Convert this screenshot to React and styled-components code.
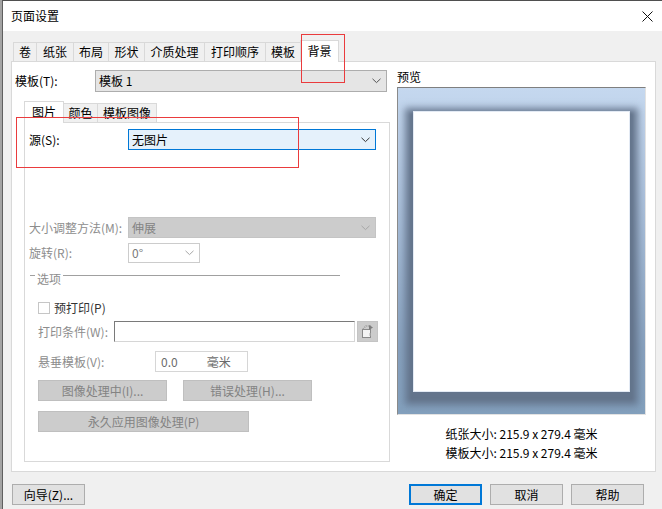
import React from "react";
import styled, { createGlobalStyle, css } from "styled-components";

const Global = createGlobalStyle`
  * { box-sizing: border-box; }
  html, body { margin: 0; padding: 0; }
  body {
    background: #a3a3a3;
    font-family: "Noto Sans CJK SC", "Noto Sans", sans-serif;
    font-size: 12px;
    color: #000;
    overflow: hidden;
  }
`;

const Window = styled.div`
  position: relative;
  margin-left: 2px;
  width: 660px;
  height: 509px;
  border-left: 1px solid #5f5f5f;
  border-top: 1px solid #4f4f4f;
  display: flex;
  flex-direction: column;
  background: #f0f0f0;
`;

const TitleBar = styled.div`
  height: 30px;
  flex: none;
  background: #fff;
  display: flex;
  align-items: center;
  justify-content: space-between;
  padding: 0 9px 0 8px;
  font-size: 12px;
  line-height: 16px;
`;

const Body = styled.div`
  flex: 1;
  display: flex;
  flex-direction: column;
  padding: 9px 6px 0 8px;
`;

const TabStrip = styled.div`
  display: flex;
  align-items: flex-end;
  height: ${(p) => p.$h}px;
  padding-left: ${(p) => p.$indent}px;
  flex: none;
`;

const Tab = styled.div`
  width: ${(p) => p.$w}px;
  height: ${(p) => (p.$active ? p.$h + 1 : p.$h - 2)}px;
  margin-bottom: ${(p) => (p.$active ? -1 : 0)}px;
  margin-left: ${(p) => (p.$first ? 0 : -1)}px;
  border: 1px solid #d9d9d9;
  border-bottom: none;
  background: ${(p) => (p.$active ? "#fff" : "#f0f0f0")};
  position: relative;
  z-index: ${(p) => (p.$active ? 2 : 1)};
  display: flex;
  align-items: ${(p) => (p.$active ? "flex-start" : "center")};
  padding-top: ${(p) => (p.$active ? 2 : 0)}px;
  justify-content: center;
  line-height: 16px;
  white-space: nowrap;
`;

const Panel = styled.div`
  height: 411px;
  flex: none;
  background: #fff;
  border: 1px solid #d9d9d9;
  display: flex;
  padding: 8px 9px 9px 3px;
  position: relative;
  z-index: 1;
`;

const LeftCol = styled.div`
  width: 375px;
  display: flex;
  flex-direction: column;
`;

const RightCol = styled.div`
  width: 249px;
  margin-left: 7px;
  display: flex;
  flex-direction: column;
`;

const Row = styled.div`
  display: flex;
  align-items: center;
  height: ${(p) => p.$h || 21}px;
  margin-top: ${(p) => p.$mt || 0}px;
  padding-left: ${(p) => p.$pl || 0}px;
  flex: none;
`;

const Label = styled.div`
  width: ${(p) => p.$w}px;
  flex: none;
  line-height: 16px;
  white-space: nowrap;
  color: ${(p) => (p.$disabled ? "#8d8d8d" : "#000")};
`;

const variants = {
  plain: css`
    background: #e5e5e5;
    border: 1px solid #adadad;
    color: #000;
  `,
  focus: css`
    background: #e5f1fb;
    border: 1px solid #0078d7;
    color: #000;
  `,
  disabled: css`
    background: #cccccc;
    border: 1px solid #c4c4c4;
    color: #838383;
  `,
  white: css`
    background: #fff;
    border: 1px solid #cccccc;
    color: #7a7a7a;
  `,
};

const Select = styled.div`
  width: ${(p) => p.$w}px;
  height: ${(p) => p.$h || 21}px;
  ${(p) => variants[p.$variant]}
  display: flex;
  align-items: center;
  justify-content: space-between;
  padding: 0 5px 0 3px;
  line-height: 16px;
  flex: none;
`;

const Chevron = ({ color = "#555" }) => (
  <svg width="9" height="6" viewBox="0 0 9 6">
    <path d="M0.5 0.8 L4.5 4.6 L8.5 0.8" fill="none" stroke={color} strokeWidth="1" />
  </svg>
);

const InnerTabsWrap = styled.div`
  margin-top: 9px;
  margin-left: 9px;
  display: flex;
  flex-direction: column;
`;

const InnerPanel = styled.div`
  width: 366px;
  height: 340px;
  border: 1px solid #d9d9d9;
  padding: 6px 4px 0 4px;
  display: flex;
  flex-direction: column;
`;

const GroupHead = styled.div`
  display: flex;
  align-items: flex-start;
  width: 311px;
  margin-top: 6px;
  height: 17px;
  padding-left: 1px;
  color: #8d8d8d;
  line-height: 16px;
`;

const GroupLine = styled.div`
  height: 1px;
  background: #a0a0a0;
  margin-top: 6px;
  width: ${(p) => (p.$w ? `${p.$w}px` : "auto")};
  flex: ${(p) => (p.$w ? "none" : 1)};
`;

const GroupTitle = styled.span`
  margin: 2px 2px 0 2px;
`;

const CheckBox = styled.div`
  width: 12px;
  height: 12px;
  border: 1px solid #c6c6c6;
  background: #fff;
  margin-right: 4px;
  flex: none;
`;

const CheckText = styled.span`
  color: #333;
  line-height: 16px;
`;

const TextInput = styled.div`
  width: ${(p) => p.$w}px;
  height: 21px;
  background: #fff;
  border: 1px solid #d6d6d6;
  ${(p) =>
    p.$sunken &&
    css`
      border-top-color: #7a7a7a;
      border-left-color: #7a7a7a;
    `}
  display: flex;
  align-items: center;
  padding-left: 5px;
  color: #6b6b6b;
  line-height: 16px;
  flex: none;
`;

const Unit = styled.span`
  margin-left: 29px;
`;

const IconBtn = styled.div`
  width: 21px;
  height: 21px;
  margin-left: 2px;
  background: #cccccc;
  border: 1px solid #c4c4c4;
  display: flex;
  align-items: center;
  justify-content: center;
  flex: none;
`;

const Button = styled.div`
  width: ${(p) => p.$w}px;
  height: 21px;
  flex: none;
  display: flex;
  align-items: center;
  justify-content: center;
  line-height: 16px;
  white-space: nowrap;
  ${(p) =>
    p.$disabled
      ? css`
          background: #cccccc;
          border: 1px solid #bfbfbf;
          color: #838383;
        `
      : css`
          background: #e1e1e1;
          border: ${p.$default ? "2px solid #0078d7" : "1px solid #adadad"};
          color: #000;
        `}
`;

const ButtonRow = styled.div`
  display: flex;
  gap: ${(p) => p.$gap}px;
  margin-top: ${(p) => p.$mt}px;
  padding-left: ${(p) => p.$pl || 0}px;
`;

const PreviewTitle = styled.div`
  line-height: 14px;
  height: 14px;
  margin-bottom: 3px;
`;

const PreviewBox = styled.div`
  width: 249px;
  height: 330px;
  border-top: 1px solid #7f7f7f;
  border-left: 1px solid #8a8a8a;
  border-right: 1px solid #e2e2e2;
  border-bottom: 1px solid #e2e2e2;
  background: linear-gradient(180deg, #c5d8ef 0%, #a8bed9 40%, #88a2bf 80%, #83a0bd 100%);
  padding: 23px 15px;
  overflow: hidden;
`;

const Page = styled.div`
  width: 217px;
  height: 281px;
  background: #fff;
  border: 1px solid #e3eaf4;
  box-shadow: 0 5px 7px 8px rgba(98, 114, 138, 0.9), 0 5px 2px 3px rgba(100, 115, 136, 0.6);
`;

const SizeInfo = styled.div`
  margin-top: 9px;
  text-align: center;
  line-height: 19px;
`;

const BottomBar = styled.div`
  height: 37px;
  flex: none;
  display: flex;
  justify-content: space-between;
  align-items: flex-start;
  padding: 12px 12px 0 1px;
`;

const RightButtons = styled.div`
  display: flex;
  gap: 8px;
`;

const Annotation = styled.div`
  position: absolute;
  left: ${(p) => p.$x}px;
  top: ${(p) => p.$y}px;
  width: ${(p) => p.$w}px;
  height: ${(p) => p.$h}px;
  border: 1px solid #ea3b3d;
  pointer-events: none;
  z-index: 10;
`;

const outerTabs = [
  ["卷", 24],
  ["纸张", 38],
  ["布局", 36],
  ["形状", 37],
  ["介质处理", 61],
  ["打印顺序", 62],
  ["模板", 36],
  ["背景", 39, true],
];

const innerTabs = [
  ["图片", 40, true],
  ["颜色", 35],
  ["模板图像", 60],
];

const CloseIcon = () => (
  <svg width="11" height="11" viewBox="0 0 11 11">
    <path d="M0.5 0.5 L10.5 10.5 M10.5 0.5 L0.5 10.5" stroke="#111" strokeWidth="1" />
  </svg>
);

const BrowseIcon = () => (
  <svg width="15" height="15" viewBox="0 0 15 15">
    <rect x="2.5" y="5.5" width="8" height="8" fill="#f4f4f4" stroke="#8a8a8a" />
    <path d="M3 5 L6 2 L11 2" fill="none" stroke="#9a9a9a" strokeWidth="1.5" strokeDasharray="1 1" />
    <path d="M9 1 L13 3.5 L9 6 Z" fill="#7d7d7d" />
    <path d="M10 9 L10 12" stroke="#b0b0b0" />
  </svg>
);

export default function App() {
  return (
    <>
      <Global />
      <Window>
        <TitleBar>
          <span>页面设置</span>
          <CloseIcon />
        </TitleBar>
        <Body>
          <TabStrip $h={21} $indent={2}>
            {outerTabs.map(([t, w, a], i) => (
              <Tab key={t} $w={w} $h={21} $active={a} $first={i === 0}>
                {t}
              </Tab>
            ))}
          </TabStrip>
          <Panel>
            <LeftCol>
              <Row $h={22}>
                <Label $w={80}>模板(T):</Label>
                <Select $w={292} $h={22} $variant="plain">
                  <span>模板 1</span>
                  <Chevron />
                </Select>
              </Row>
              <InnerTabsWrap>
                <TabStrip $h={21} $indent={0}>
                  {innerTabs.map(([t, w, a], i) => (
                    <Tab key={t} $w={w} $h={21} $active={a} $first={i === 0}>
                      {t}
                    </Tab>
                  ))}
                </TabStrip>
                <InnerPanel>
                  <Row>
                    <Label $w={99}>源(S):</Label>
                    <Select $w={248} $variant="focus">
                      <span>无图片</span>
                      <Chevron color="#333" />
                    </Select>
                  </Row>
                  <Row $mt={67}>
                    <Label $w={99} $disabled>
                      大小调整方法(M):
                    </Label>
                    <Select $w={248} $variant="disabled">
                      <span>伸展</span>
                      <Chevron color="#a6a6a6" />
                    </Select>
                  </Row>
                  <Row $mt={5} $h={20}>
                    <Label $w={99} $disabled>
                      旋转(R):
                    </Label>
                    <Select $w={72} $h={20} $variant="white">
                      <span>0°</span>
                      <Chevron color="#a6a6a6" />
                    </Select>
                  </Row>
                  <GroupHead>
                    <GroupLine $w={5} />
                    <GroupTitle>选项</GroupTitle>
                    <GroupLine />
                  </GroupHead>
                  <Row $mt={14} $h={16} $pl={9}>
                    <CheckBox />
                    <CheckText>预打印(P)</CheckText>
                  </Row>
                  <Row $mt={5} $pl={9}>
                    <Label $w={76} $disabled>
                      打印条件(W):
                    </Label>
                    <TextInput $w={241} $sunken />
                    <IconBtn>
                      <BrowseIcon />
                    </IconBtn>
                  </Row>
                  <Row $mt={9} $pl={9}>
                    <Label $w={117} $disabled>
                      悬垂模板(V):
                    </Label>
                    <TextInput $w={93}>
                      0.0<Unit>毫米</Unit>
                    </TextInput>
                  </Row>
                  <ButtonRow $gap={16} $mt={8} $pl={9}>
                    <Button $w={129} $disabled>
                      图像处理中(I)...
                    </Button>
                    <Button $w={129} $disabled>
                      错误处理(H)...
                    </Button>
                  </ButtonRow>
                  <ButtonRow $gap={0} $mt={10} $pl={9}>
                    <Button $w={211} $disabled>
                      永久应用图像处理(P)
                    </Button>
                  </ButtonRow>
                </InnerPanel>
              </InnerTabsWrap>
            </LeftCol>
            <RightCol>
              <PreviewTitle>预览</PreviewTitle>
              <PreviewBox>
                <Page />
              </PreviewBox>
              <SizeInfo>
                <div>纸张大小: 215.9 x 279.4 毫米</div>
                <div>模板大小: 215.9 x 279.4 毫米</div>
              </SizeInfo>
            </RightCol>
          </Panel>
          <BottomBar>
            <Button $w={73}>向导(Z)...</Button>
            <RightButtons>
              <Button $w={73} $default>
                确定
              </Button>
              <Button $w={73}>取消</Button>
              <Button $w={73}>帮助</Button>
            </RightButtons>
          </BottomBar>
        </Body>
        <Annotation $x={298} $y={33} $w={44} $h={49} />
        <Annotation $x={13} $y={116} $w={283} $h={51} />
      </Window>
    </>
  );
}
